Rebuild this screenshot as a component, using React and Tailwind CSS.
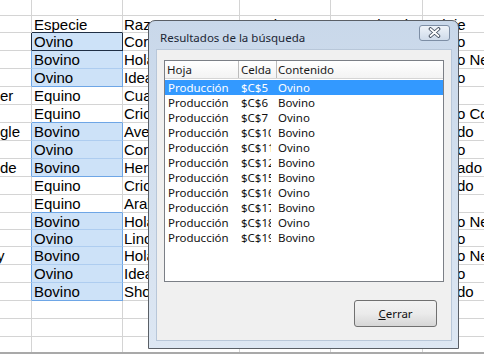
import React from "react";

const rows = [
  { a: "", c: "Ovino", d: "Corriedale", e: "", f: "", g: "o", sel: true, first: true, active: true },
  { a: "", c: "Bovino", d: "Holando", g: "o Ne", sel: true },
  { a: "", c: "Ovino", d: "Ideal", g: "o", sel: true, last: true },
  { a: "er", c: "Equino", d: "Cuarto de milla", g: "" },
  { a: "", c: "Equino", d: "Criollo", g: "o Co", before: true },
  { a: "gle", c: "Bovino", d: "Aveshire", g: "do", sel: true, first: true },
  { a: "", c: "Ovino", d: "Corriedale", g: "o", sel: true },
  { a: "de", c: "Bovino", d: "Hereford", g: "ado", sel: true, last: true },
  { a: "", c: "Equino", d: "Criollo", g: "do" },
  { a: "", c: "Equino", d: "Arabe", g: "", before: true },
  { a: "", c: "Bovino", d: "Holando", g: "o Ne", sel: true, first: true, short: true },
  { a: "", c: "Ovino", d: "Lincoln", g: "o", sel: true, short: true },
  { a: "y", c: "Bovino", d: "Holando", g: "o Ne", sel: true },
  { a: "", c: "Ovino", d: "Ideal", g: "o", sel: true },
  { a: "", c: "Bovino", d: "Shorthorn", g: "do", sel: true, last: true },
];

const results = [
  ["$C$5", "Ovino"],
  ["$C$6", "Bovino"],
  ["$C$7", "Ovino"],
  ["$C$10", "Bovino"],
  ["$C$11", "Ovino"],
  ["$C$12", "Bovino"],
  ["$C$15", "Bovino"],
  ["$C$16", "Ovino"],
  ["$C$17", "Bovino"],
  ["$C$18", "Ovino"],
  ["$C$19", "Bovino"],
];

function SheetRow({ h, a, c, d, e, f, g, aClass, cClass, cBg }) {
  return (
    <div className={`flex ${h}`}>
      <div className={`w-[32px] shrink-0 border-b border-r border-b-[#d4d4d4] overflow-hidden whitespace-nowrap pl-0 flex items-center ${aClass}`}>
        {a === "y" ? <span className="-ml-[3px]">y</span> : a}
      </div>
      <div className={`w-[91px] shrink-0 border-b border-r overflow-hidden whitespace-nowrap pl-[2px] flex items-center ${cClass} ${cBg}`}>
        {c}
      </div>
      <div className="w-[117px] shrink-0 border-b border-r border-[#d4d4d4] overflow-hidden whitespace-nowrap pl-[1px] flex items-center">
        {d}
      </div>
      <div className="w-[91px] shrink-0 border-b border-r border-[#d4d4d4] overflow-hidden whitespace-nowrap pl-[2px] flex items-center">
        {e}
      </div>
      <div className="w-[92px] shrink-0 border-b border-r border-[#d4d4d4] overflow-hidden whitespace-nowrap pl-[2px] flex items-center">
        {f}
      </div>
      <div className="flex-1 border-b border-[#d4d4d4] overflow-hidden whitespace-nowrap pl-[34px] flex items-center">
        {g}
      </div>
    </div>
  );
}

function CloseGlyph() {
  return (
    <svg width="13" height="11" viewBox="0 0 13 11">
      <path d="M2.5 2 L10.5 9 M10.5 2 L2.5 9" stroke="#3f4a5a" strokeWidth="3.6" strokeLinecap="round" fill="none" />
      <path d="M2.5 2 L10.5 9 M10.5 2 L2.5 9" stroke="#ffffff" strokeWidth="1.8" strokeLinecap="round" fill="none" />
    </svg>
  );
}

export default function App() {
  return (
    <div
      className="relative w-[484px] h-[355px] overflow-hidden bg-white text-black text-[15px] leading-[17px]"
      style={{ fontFamily: '"Liberation Sans", Arial, sans-serif' }}
    >
      {/* spreadsheet */}
      <div className="flex flex-col">
        <SheetRow h="h-[16px]" a="" c="" d="" e="" f="" g="" aClass="border-r-[#d4d4d4]" cClass="border-[#d4d4d4]" cBg="" />
        <SheetRow
          h="h-[17px]"
          a=""
          c="Especie"
          d="Raza"
          e="Nombre"
          f="Procedencia"
          g={<span className="-ml-[33px]">Pelaje</span>}
          aClass="border-r-[#d4d4d4]"
          cClass="border-r-[#d4d4d4] border-b-[#1f2f45]"
          cBg=""
        />
        {rows.map((r, i) => {
          const h = r.short ? "h-[17px]" : "h-[18px]";
          let aClass = "border-r-[#d4d4d4]";
          let cClass = "border-r-[#d4d4d4] border-b-[#d4d4d4]";
          let cBg = "";
          if (r.sel) {
            aClass = r.active ? "border-r-[#1f2f45]" : "border-r-[#6ea6e6]";
            cBg = "bg-[#cde2f8]";
            if (r.active) cClass = "border-r-[#1f2f45] border-b-[#1f2f45]";
            else if (r.last) cClass = "border-r-[#6ea6e6] border-b-[#6ea6e6]";
            else cClass = "border-r-[#6ea6e6] border-b-[#aecdf0]";
          } else if (r.before) {
            cClass = "border-r-[#d4d4d4] border-b-[#6ea6e6]";
          }
          return (
            <SheetRow key={i} h={h} a={r.a} c={r.c} d={r.d} e="" f="" g={r.g} aClass={aClass} cClass={cClass} cBg={cBg} />
          );
        })}
        <SheetRow h="h-[18px]" a="" c="" d="" e="" f="" g="" aClass="border-r-[#d4d4d4]" cClass="border-[#d4d4d4]" cBg="" />
        <SheetRow h="h-[18px]" a="" c="" d="" e="" f="" g="" aClass="border-r-[#d4d4d4]" cClass="border-[#d4d4d4]" cBg="" />
        <div className="h-[15px] flex">
          <div className="w-[32px] border-r border-[#d4d4d4]" />
          <div className="w-[91px] border-r border-[#d4d4d4]" />
          <div className="w-[117px] border-r border-[#d4d4d4]" />
          <div className="w-[91px] border-r border-[#d4d4d4]" />
          <div className="w-[92px] border-r border-[#d4d4d4]" />
        </div>
        <div className="h-[2px] bg-[#a9a9a9]" />
      </div>

      {/* dialog */}
      <div
        className="absolute left-[148px] top-[20px] w-[311px] h-[329px] border border-[#5a5f66] rounded-t-[7px] bg-gradient-to-b from-[#c9d8ea] to-[#dde7f3] flex flex-col"
        style={{ fontFamily: '"Noto Sans", "Open Sans", sans-serif' }}
      >
        <div className="h-[28px] shrink-0 flex items-center justify-between pl-[11px] pr-[8px]">
          <span className="text-[11.5px] text-[#1b2634] leading-none pt-[6px]">Resultados de la búsqueda</span>
          <div className="w-[31px] h-[16px] rounded-[3px] border border-[#7d8ea5] bg-gradient-to-b from-[#eef3f9] to-[#cfdbea] flex items-center justify-center mt-[-5px]">
            <CloseGlyph />
          </div>
        </div>
        <div className="flex-1 flex px-[7px] pb-[7px] pr-[6px]">
          <div className="flex-1 bg-[#f0f0f0] border border-[#b8c7d9] flex flex-col">
            <div className="mt-[10px] ml-[7px] w-[280px] h-[222px] border border-[#7b7f86] bg-white flex flex-col text-[11.5px] leading-none">
              <div className="h-[18px] shrink-0 flex bg-gradient-to-b from-white to-[#f3f3f3] border-b border-[#d5d5d5] text-[#1a1a1a]">
                <div className="w-[74px] border-r border-[#bcbcbc] pl-[2px] flex items-center">Hoja</div>
                <div className="w-[38px] border-r border-[#bcbcbc] pl-[2px] flex items-center">Celda</div>
                <div className="flex-1 pl-[1px] flex items-center">Contenido</div>
              </div>
              <div className="flex flex-col pt-[1px]">
                {results.map(([cell, val], i) => (
                  <div
                    key={i}
                    className={`h-[15px] flex items-center ${i === 0 ? "bg-[#3399ff] text-white" : "text-[#111]"}`}
                  >
                    <div className="w-[74px] pl-[3px] overflow-hidden whitespace-nowrap">Producción</div>
                    <div className="w-[37px] pl-[2px]">
                      <div className="w-[30px] overflow-hidden whitespace-nowrap">{cell}</div>
                    </div>
                    <div className="flex-1 pl-[2px] overflow-hidden whitespace-nowrap">{val}</div>
                  </div>
                ))}
              </div>
            </div>
            <div className="flex justify-end mt-[18px] pr-[14px]">
              <div className="w-[83px] h-[27px] rounded-[3px] border border-[#707070] bg-gradient-to-b from-[#f3f3f3] via-[#ebebeb] to-[#d6d6d6] flex items-center justify-center text-[11.5px] text-[#111]">
                <span>
                  <span className="underline">C</span>errar
                </span>
              </div>
            </div>
          </div>
        </div>
      </div>
    </div>
  );
}
